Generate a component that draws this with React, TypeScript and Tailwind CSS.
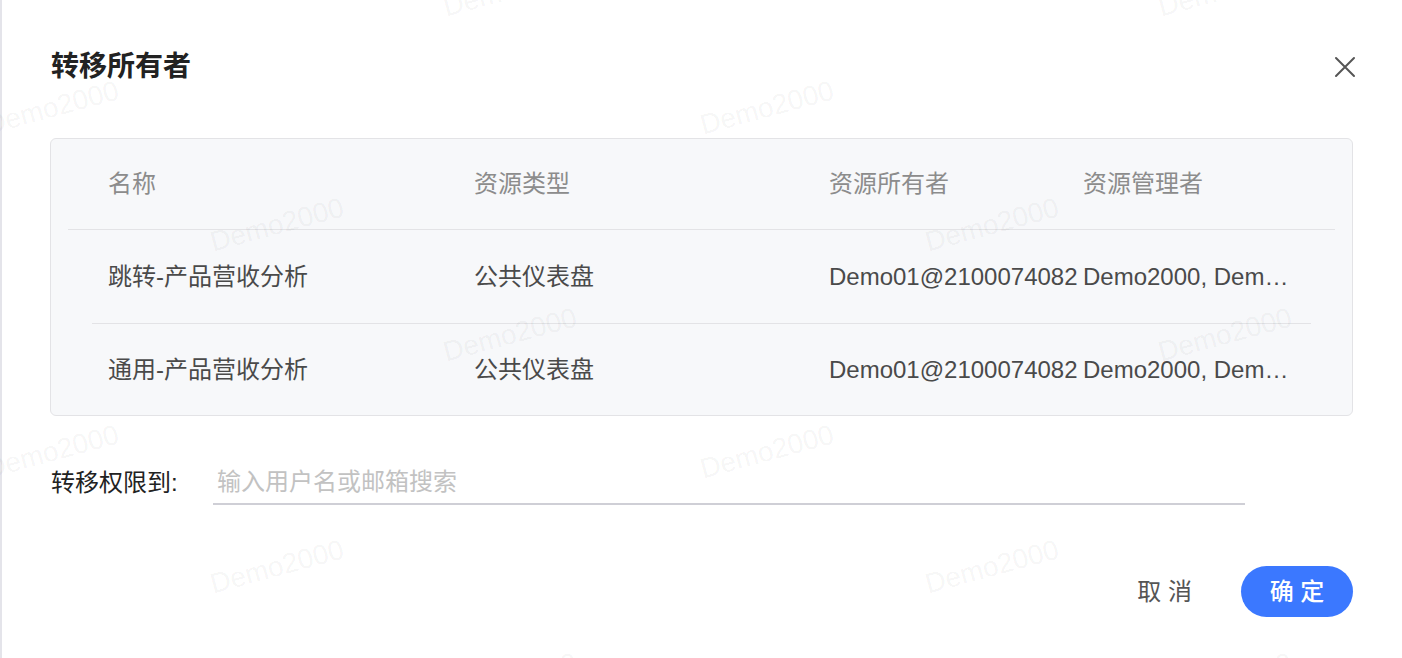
import React from "react";

interface Row {
    name: string;
    type: string;
    owner: string;
    managers: string;
}

const rows: Row[] = [
    {name: "跳转-产品营收分析", type: "公共仪表盘", owner: "Demo01@2100074082", managers: "Demo2000, Demo01@2100074082"},
    {name: "通用-产品营收分析", type: "公共仪表盘", owner: "Demo01@2100074082", managers: "Demo2000, Demo01@2100074082"},
];

// watermark centres, repeated tile of three marks
const marks: [number, number][] = [
    [510, -10], [1225, -10],
    [52, 108], [277, 225], [510, 335],
    [767, 108], [992, 225], [1225, 335],
    [52, 452], [277, 567], [510, 680],
    [767, 452], [992, 567], [1225, 680],
];

const cols = "grid grid-cols-[366px_355px_254px_210px] items-center";

const CloseIcon = () => (
    <svg width="22" height="22" viewBox="0 0 22 22" className="-mr-[3px]">
        <path d="M2 2 L20 20 M20 2 L2 20" stroke="#555" strokeWidth="2" strokeLinecap="round" />
    </svg>
);

export default function App() {
    return (
        <div className="relative flex h-[658px] w-full overflow-hidden bg-white font-['Liberation_Sans','Noto_Sans_CJK_SC',sans-serif]">
            <div className="w-[2px] shrink-0 bg-[#e4e4ea]" />

            <div className="flex flex-1 flex-col pl-[48px] pr-[49px]">
                {/* title */}
                <div className="mt-[47px] flex h-[40px] items-center justify-between">
                    <h1 className="pl-[1px] text-[28px] font-bold text-[#222]">转移所有者</h1>
                    <CloseIcon />
                </div>

                {/* resource table */}
                <div className="mt-[51px] rounded-[6px] border border-[#e3e3e6] bg-[#f7f8fa] text-[24px]">
                    <div className={`${cols} mx-[17px] h-[91px] border-b border-[#e3e3e6] pl-[40px] text-[#8c8c8c]`}>
                        <div>名称</div>
                        <div>资源类型</div>
                        <div>资源所有者</div>
                        <div>资源管理者</div>
                    </div>
                    {rows.map((row, i) => (
                        <div
                            key={row.name}
                            className={`${cols} mx-[41px] pl-[16px] text-[#4a4a4a] ${i === 0 ? "h-[94px] border-b border-[#e3e3e6]" : "h-[91px]"}`}
                        >
                            <div className="truncate">{row.name}</div>
                            <div className="truncate">{row.type}</div>
                            <div className="whitespace-nowrap">{row.owner}</div>
                            <div className="truncate">{row.managers}</div>
                        </div>
                    ))}
                </div>

                {/* transfer target */}
                <div className="mt-[45px] flex items-center text-[24px]">
                    <label className="w-[163px] pl-[1px] text-[#222]">转移权限到:</label>
                    <input
                        className="h-[44px] w-[1032px] border-b-2 border-[#cfcfd6] bg-transparent pl-[4px] text-[#333] outline-none placeholder:text-[#c2c2c2]"
                        placeholder="输入用户名或邮箱搜索"
                    />
                </div>

                {/* footer */}
                <div className="mt-[61px] flex items-center justify-end gap-[33px] text-[24px]">
                    <button className="h-[51px] px-[16px] text-[#555]">取 消</button>
                    <button className="h-[51px] w-[112px] rounded-full bg-[#3b78ff] font-medium text-white">确 定</button>
                </div>
            </div>

            {/* watermark */}
            <div className="pointer-events-none absolute inset-0">
                {marks.map(([x, y]) => (
                    <span
                        key={`${x}-${y}`}
                        className="absolute -translate-x-1/2 -translate-y-1/2 -rotate-[15deg] whitespace-nowrap text-[28px] text-black/[0.05]"
                        style={{left: x, top: y}}
                    >
                        Demo2000
                    </span>
                ))}
            </div>
        </div>
    );
}
